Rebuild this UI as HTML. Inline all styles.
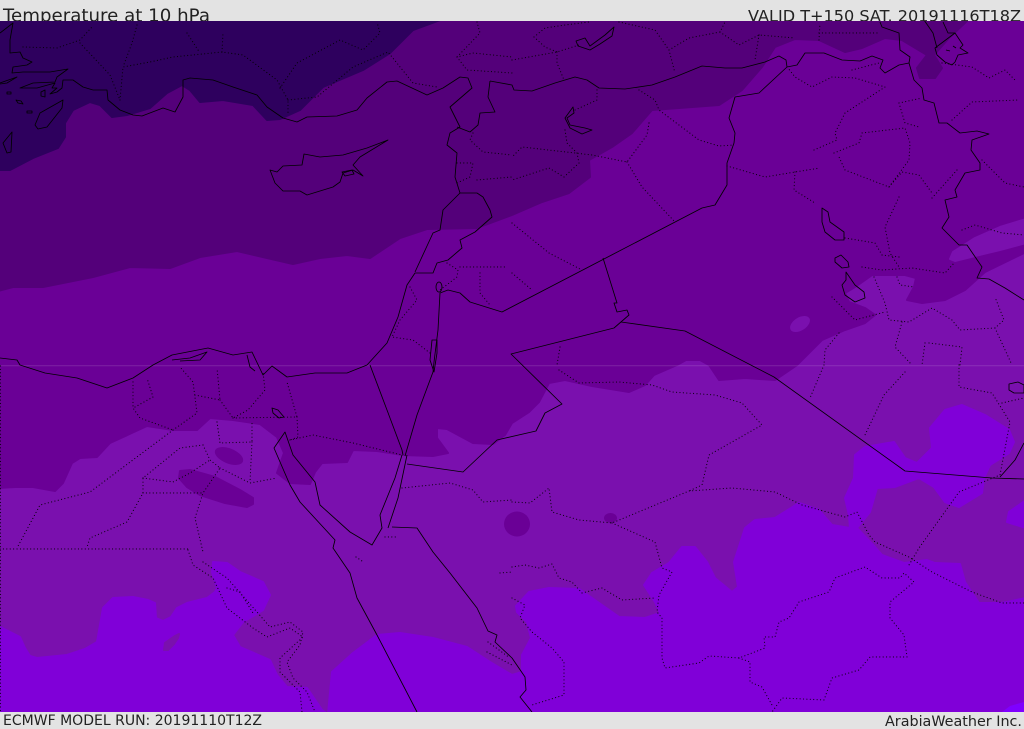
<!DOCTYPE html>
<html lang="en">
<head>
<meta charset="utf-8">
<title>Temperature at 10 hPa</title>
<style>
html,body{margin:0;padding:0;width:1024px;height:729px;overflow:hidden;background:#e3e3e3}
svg{display:block;position:absolute;left:0;top:0}
text{font-family:"DejaVu Sans","Liberation Sans",sans-serif;fill:#222}
.c{fill:none;stroke:#000;stroke-width:.85;stroke-linejoin:round}
.d{fill:none;stroke:#000;stroke-width:1.15;stroke-dasharray:.01 3.4;stroke-linecap:round;opacity:.9}
.f{stroke-linejoin:round;stroke-width:2}
</style>
</head>
<body>
<svg width="1024" height="729" viewBox="0 0 1024 729" xmlns="http://www.w3.org/2000/svg">
<defs><clipPath id="m"><rect x="0" y="21" width="1024" height="691"/></clipPath></defs>
<rect width="1024" height="729" fill="#e3e3e3"/>
<text x="3" y="21.500" font-size="18" textLength="207" lengthAdjust="spacingAndGlyphs">Temperature at 10 hPa</text>
<text x="748" y="21.500" font-size="16" textLength="273" lengthAdjust="spacingAndGlyphs">VALID T+150 SAT. 20191116T18Z</text>
<text x="3" y="725" font-size="14" textLength="259" lengthAdjust="spacingAndGlyphs">ECMWF MODEL RUN: 20191110T12Z</text>
<text x="885" y="726" font-size="14" textLength="137" lengthAdjust="spacingAndGlyphs">ArabiaWeather Inc.</text>

<g clip-path="url(#m)">
<rect x="0" y="21" width="1024" height="691" fill="#7a10ae"/>

<!-- level 5 bright -->
<polygon class="f" fill="#8000d8" stroke="#8000d8" points="-2,626 20,637 25,648 30,656 37,658 67,655 85,649 97,642 100,625 103,608 113,598 133,597 148,600 155,603 156,618 163,621 171,617 177,608 187,603 207,598 215,592 217,588 212,572 213,562 227,563 240,572 263,582 270,595 263,610 243,622 233,635 240,647 270,660 277,675 287,687 307,688 322,710 328,714 332,672 353,653 377,635 400,633 433,638 467,647 490,662 512,675 522,672 522,655 531,638 527,622 517,612 516,606 529,592 549,588 579,589 599,603 619,617 645,618 660,613 655,602 644,585 652,573 669,563 682,547 695,547 707,562 715,578 732,592 738,587 734,562 745,528 755,520 775,518 799,503 819,510 832,525 850,528 849,515 845,498 854,478 855,455 865,447 894,442 905,458 917,463 932,448 930,428 945,410 962,405 985,415 1009,430 1014,442 1009,453 990,465 984,478 982,493 959,507 945,502 934,487 919,478 895,487 877,488 870,512 857,528 875,547 882,555 904,563 927,560 935,563 960,564 965,582 979,603 1002,603 1026,598 1026,714 -2,714"/>
<polygon class="f" fill="#8000d8" stroke="#8000d8" points="1026,500 1009,512 1007,522 1026,528"/>
<polygon class="f" fill="#7a10ae" stroke="#7a10ae" points="179,634 175,636 165,643 164,650 168,650 174,644 178,638"/>
<polygon fill="#7f00ff" points="1002,712 1010,706 1024,702 1024,712"/>

<!-- level 3 -->
<polygon class="f" fill="#6a0096" stroke="#6a0096" points="-2,488 15,487 33,487 55,491 63,483 72,463 80,458 97,457 110,443 147,426 173,430 197,430 210,418 233,420 260,424 277,437 284,453 277,473 290,483 310,484 315,472 322,463 347,462 353,450 377,451 403,455 433,456 448,453 437,438 437,428 447,429 473,443 493,444 505,435 512,423 529,412 539,402 549,383 565,380 592,386 629,392 645,385 654,375 677,365 686,360 700,360 709,365 719,380 745,378 775,380 797,365 822,340 845,330 865,323 875,315 865,308 849,302 845,293 855,287 872,275 905,275 916,278 914,287 907,300 922,303 945,300 965,290 985,272 1026,252 1026,19 -2,19"/>
<polygon class="f" fill="#7a10ae" stroke="#7a10ae" points="950,259 953,252 964,245 975,238 1000,227 1026,219 1026,243 1000,250 975,256 955,261"/>
<ellipse cx="800" cy="324" rx="11" ry="6.500" fill="#7a10ae" transform="rotate(-32 800 324)"/>
<ellipse cx="229" cy="456" rx="15" ry="7.500" fill="#6a0096" transform="rotate(22 229 456)"/>
<polygon class="f" fill="#6a0096" stroke="#6a0096" points="180,471 190,470 215,477 240,490 253,498 253,504 247,507 225,503 200,495 187,487 179,478"/>
<ellipse cx="517" cy="524" rx="13" ry="12.500" fill="#6a0096"/>
<ellipse cx="610.500" cy="518" rx="6.500" ry="5" fill="#6a0096"/>

<!-- level 2 -->
<polygon class="f" fill="#54007a" stroke="#54007a" points="-2,291 13,287 43,287 93,277 130,267 170,268 200,257 237,251 267,258 293,264 320,258 347,255 370,258 400,238 427,229 477,228 512,215 542,202 569,193 590,177 589,160 612,147 632,133 652,110 679,108 719,105 742,90 762,67 775,47 795,39 819,40 845,52 862,48 885,38 902,40 927,55 917,68 920,78 935,78 942,68 934,55 949,38 969,19 -2,19"/>

<!-- level 1 -->
<polygon class="f" fill="#2e005e" stroke="#2e005e" points="-2,170 10,170 33,158 58,148 65,137 65,123 73,110 90,102 100,105 112,117 127,115 150,108 167,93 182,85 190,90 200,102 223,100 253,105 267,120 280,119 300,110 323,87 363,70 390,53 413,30 443,19 -2,19"/>

<!-- faint band -->
<rect x="0" y="365" width="1024" height="1.300" fill="#ffffff" opacity=".1"/>

<!-- dotted borders -->
<g class="d">
<path d="M.5 366V712"/>
<path d="M23 47L57 48 80 40 92 27M80 43L110 75 120 100M120 100L123 67 150 62 173 57 222 52 243 55 277 80 288 100 288 115M137 25L132 43 123 67M187 33L200 53M222 52L223 33M280 88L297 63 340 40 363 50 380 33 377 22M288 100L317 97 353 67 388 52 413 83 437 87M477 22L480 33 457 57 473 53 512 57M457 57L467 70 512 73"/>
<path d="M473 133L470 140 483 152 512 155M457 163L473 163 470 177 457 183M477 180L512 177"/>
<path d="M447 263L458 270 457 277 440 290M460 267L507 267M480 273L480 293 490 305M410 287L417 300 400 320 392 337 413 340 430 353"/>
<path d="M534 37L545 28 565 25 589 22M534 37L545 47 557 52M512 60L557 52 579 45M557 52L557 63 564 80M669 50L689 38 720 32 725 22M669 50L675 73M619 22L655 30 669 50M720 32L739 45 759 35 795 38M759 35L755 60M819 40L820 23M819 33L879 33"/>
<path d="M597 90L597 100 575 110M639 90L655 100 659 110 699 140 719 146 734 145M649 123L647 135 627 162 592 155 575 153 522 147 512 157M565 130L567 143 577 153 579 163 564 177 549 168 512 180M627 162L642 187 675 222M512 223L549 253 582 270M727 166L765 177 795 172 820 168M795 172L794 190 815 203M814 150L837 140 835 133 845 113 885 87 855 78 832 77 812 87 795 77 788 68M852 70L879 63M834 153L859 143 862 133 905 128 910 143 909 160 889 187 845 170 839 157M899 103L922 98M899 103L905 123 919 127M889 187L902 172 919 175 932 193M932 198L957 170M899 197L885 227 890 253 899 267M952 120L972 102 1019 100M942 63L972 67 989 78 1005 70 1015 80M982 160L1005 183 1024 187M845 238L875 243 882 255 899 257M862 267L882 270 912 268 945 273 955 262M962 230L975 225 1002 233 1024 235M832 297L855 320 885 312M874 277L885 303 889 320 909 322 932 308 952 320 960 330 995 328 1004 320 995 297M897 277L900 285 914 287M902 322L895 347 912 365M925 343L922 365M929 343L962 347 960 365M995 328L1012 365M839 333L825 350 824 365M560 347L557 365M512 273L532 290"/>
<path d="M559 370L579 383 619 382 652 385 672 392 715 395 742 403 762 425 709 455 702 485 689 491M512 502L530 503 549 488 552 512 579 520 612 523 689 491 732 488 775 492 802 505 845 517 857 512 869 535 875 542 909 557 932 572 972 592 1002 603 1024 603"/>
<path d="M612 523L655 542 662 568 672 572 659 595 657 612 662 618 662 658 665 668 699 663 709 656 739 658 765 648 764 637 775 637 779 622 789 618 799 602 829 592 835 578 865 567 882 578 900 578 904 573 914 582 890 602 890 618 904 635 907 657 870 657 859 670 832 678 824 700 782 698 772 712M739 658L750 662 750 682 762 687 772 705M512 567L525 565 539 568 552 564 559 578 572 582 582 593 602 588 622 600 655 598M512 598L525 605 520 618 532 632 552 648 564 662 564 695 532 705M959 365L959 387 992 393 1010 422 1000 475 959 492 919 548 909 565M905 372L884 395 865 435M824 365L810 398M1002 403L1024 398"/>
<path d="M133 382L133 408 140 418 173 430M135 407L153 397 147 378M173 430L197 413 193 382 180 367M195 395L220 400 217 368M220 400L233 418 248 410 265 390 263 372M233 418L297 417 287 382M297 417L298 437 290 440M173 430L90 492 40 505 17 548M203 445L180 448 143 478 143 493 127 522 90 538 87 547M203 445L210 460 220 468 203 493 195 518 203 552M143 478L173 482 190 473 210 460M143 493L203 493M217 422L220 443 252 442 252 422M252 442L250 482M220 468L250 483 277 478M0 549L188 549M188 550L193 565 213 578 227 608 253 628 267 637 290 628 303 637 280 658 280 672 300 692 302 712M203 562L227 578 257 612 270 627 290 622 303 632 300 645 287 662 293 678 307 692 315 712M227 588L240 592 253 613"/>
<path d="M290 440L313 435 353 443 402 455M402 488L450 483 473 490 483 502 512 500M385 537L397 537M356 557L362 561M488 642L510 658M487 652L512 665M500 573L512 572"/>
</g>

<!-- coastlines / borders -->
<g class="c">
<path d="M0 33L13 23 10 40 10 53 20 52 23 58 32 62 27 65 13 67 12 73 23 72 50 72 68 69 57 77 55 82 33 83 20 88 37 88 55 83 52 88 57 88 50 94 57 92 62 88 63 80 73 80 83 87 93 90"/>
<path d="M0 83L17 77 7 83 0 84"/>
<path d="M93 90L107 90 108 100 120 110 133 115 142 116 163 108 175 112 183 97 183 80 190 78 213 80 233 87 257 95 267 107 283 118 297 122 307 117 337 116 357 110 367 98 387 82 397 81 427 95 443 88 460 77 468 78 472 88 450 107 460 127 450 133 447 145 457 153 455 177 460 193 477 193 483 197 490 210 492 217 475 232 460 240 462 248 448 260 437 263 433 273 415 273 407 285 398 317 387 343 367 365"/>
<path d="M460 193L443 210 440 230 433 233 415 272"/>
<path d="M490 81L512 85 514 90 532 91 555 83 575 77 587 80 599 88 625 89 652 85 675 77 702 66 725 68 742 68 765 62 779 56 786 60 787 67 797 65 805 53 824 53 842 60 860 61 872 56 883 60 880 68 885 73 899 65 909 63 914 80 922 88 924 100 934 103 939 123 947 123 960 133 977 131 989 134 972 140 971 150 980 163 980 170 965 173 955 190 957 197 945 200 949 217 942 228 959 245 967 245 982 267 977 278 989 279 1005 288 1024 300"/>
<path d="M490 81L488 97 495 112 480 113 478 125 470 132 457 127"/>
<path d="M880 22L882 27 899 33 900 50 910 57 909 63"/>
<path d="M924 20L933 33 937 48M943 22L948 33 955 33"/>
<path d="M935 48L955 33 963 45 960 48 968 53 958 55 955 62 952 65 945 62 937 55Z"/>
<path d="M946 50l4 1M953 46l3 2"/>
<path d="M787 67L759 93 735 97 729 118 735 133 734 143 727 163 727 185 715 205 702 208 502 312 470 302 460 293 448 290 440 293 438 330 434 362 433 372 417 415 405 456"/>
<path d="M370 365L387 410 402 450 403 455"/>
<path d="M407 464L463 472 497 440 536 431 545 413 562 404 511 354 614 328 629 315 627 310 617 312 614 303 617 303 603 258"/>
<path d="M621 322L685 331 774 377 905 471 992 478 1024 479M1000 477L1015 460 1024 443"/>
<path d="M402 455L395 478 380 515 382 528 372 545 350 532 320 505 315 482 293 455 285 432 274 448 290 485 300 502 335 540 333 548 350 573 357 598 377 635 417 712"/>
<path d="M407 455L398 498 388 528"/>
<path d="M392 527L417 528 433 552 450 573 477 608 488 631 497 635 495 642 512 658 525 677 526 690 520 697 532 712"/>
<path d="M0 358L17 360 20 365 45 373 77 378 107 388 133 378 153 365 172 355 208 348 233 355 252 352 263 375 272 366 287 377 315 373 347 373 367 365"/>
<path d="M172 360L190 358 207 352 200 360 180 361"/>
<path d="M247 355L250 367 255 371"/>
<path d="M270 170L275 183 283 191 300 191 307 195 333 187 340 182 343 173 353 170 363 176 353 165 360 157 388 140 367 148 343 155 320 157 304 154 302 165 283 166 277 172Z"/>
<path d="M342 172L352 170 354 174 345 176Z"/>
<path d="M35 125L40 113 63 100 62 108 47 127 38 129Z"/>
<path d="M3 143L12 132 11 152 7 153Z"/>
<path d="M41 92L45 90 45 97 41 96Z"/>
<path d="M7 92h4v2h-4z"/>
<path d="M27 111h5v2h-5z"/>
<path d="M16 100l5 1 2 3-5-1z"/>
<path d="M565 118L573 107 574 113 567 118 570 125 585 128 592 130 582 134 570 128Z"/>
<path d="M576 41L585 38 590 46 605 35 614 27 612 36 600 44 590 50 578 46Z"/>
<path d="M822 208L828 212 830 222 844 232 844 240 835 240 825 232 822 222Z"/>
<path d="M835 258L841 255 848 262 849 267 842 268 835 262Z"/>
<path d="M846 272L855 285 864 292 865 298 855 302 845 295 842 285 846 280Z"/>
<ellipse cx="439" cy="287" rx="3" ry="5"/>
<path d="M432 340L437 340 437 353 434 372 430 360Z"/>
<path d="M272 408L278 410 284 417 279 418 273 413Z"/>
<path d="M1009 384L1018 382 1024 385 1024 393 1014 393 1009 390Z"/>
</g>
</g>
</svg>
</body>
</html>
